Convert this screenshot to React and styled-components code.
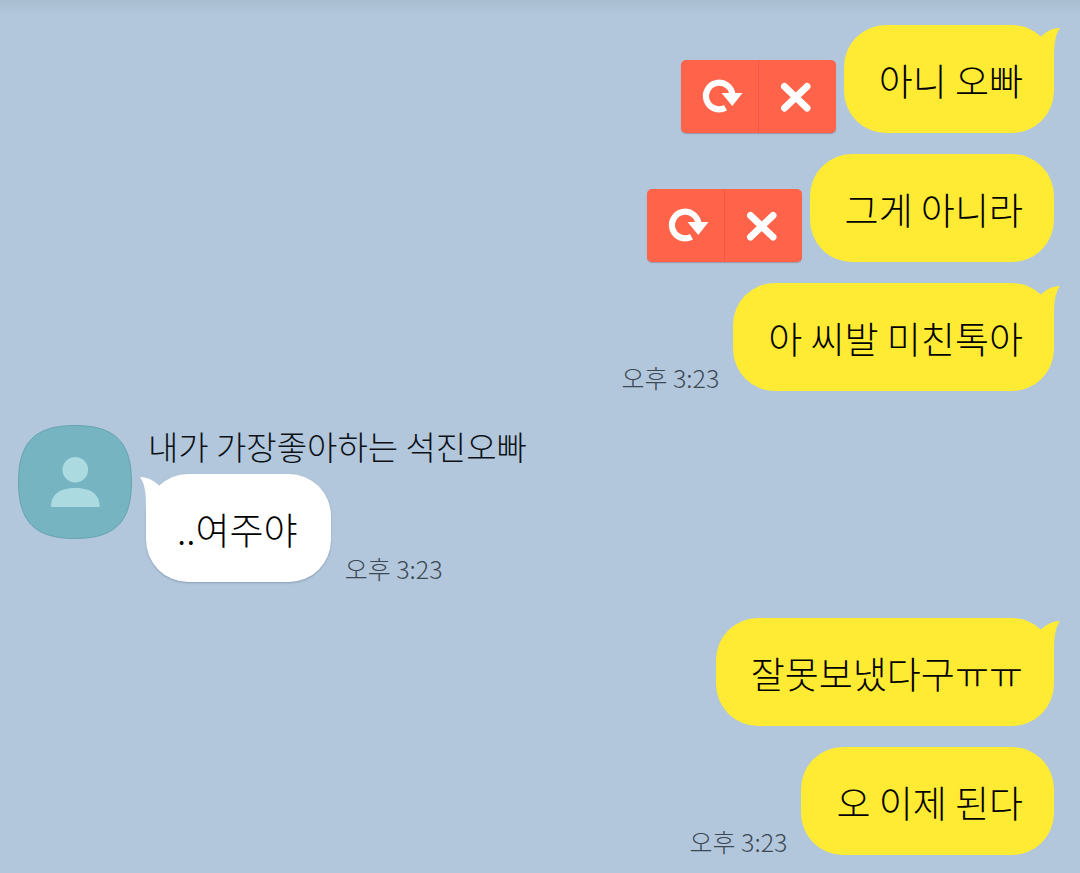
import React from "react";
import styled, { createGlobalStyle, css } from "styled-components";

const messages = [
	{ id: 1, text: "아니 오빠", failed: true, tail: true },
	{ id: 2, text: "그게 아니라", failed: true },
	{ id: 3, text: "아 씨발 미친톡아", time: "오후 3:23", tail: true },
	{ id: 4, text: "..여주야", time: "오후 3:23", sender: "내가 가장좋아하는 석진오빠", tail: true },
	{ id: 5, text: "잘못보냈다구ㅠㅠ", tail: true },
	{ id: 6, text: "오 이제 된다", time: "오후 3:23" },
];

const TailShape = ({ incoming }) => (
	<Tail $incoming={incoming} viewBox="0 0 28 42" aria-hidden="true">
		<path d="M9 11.5C14 7 20 3 28 3C24 9 22 16 22 32V42H9Z" />
	</Tail>
);

const RetryIcon = () => (
	<svg width="77" height="73" viewBox="0 0 77 73" aria-hidden="true">
		<path d="M44.5 47.8A13.3 13.3 0 1 1 51.5 35" fill="none" stroke="#fff" strokeWidth="6.2" />
		<path d="M40.5 33H61.5L51.3 46Z" fill="#fff" />
	</svg>
);

const DeleteIcon = () => (
	<svg width="77" height="73" viewBox="0 0 77 73" aria-hidden="true">
		<path d="M25.5 26.5L48 48M48 26.5L25.5 48" stroke="#fff" strokeWidth="7" strokeLinecap="round" />
	</svg>
);

const FailedActions = () => (
	<ActionGroup>
		<ActionButton type="button" aria-label="다시 보내기">
			<RetryIcon />
		</ActionButton>
		<ActionButton type="button" aria-label="삭제">
			<DeleteIcon />
		</ActionButton>
	</ActionGroup>
);

const Avatar = () => (
	<AvatarIcon viewBox="0 0 114 114" aria-hidden="true">
		<path
			d="M57 .5C97 .5 113.5 17 113.5 57C113.5 97 97 113.5 57 113.5C17 113.5 .5 97 .5 57C.5 17 17 .5 57 .5Z"
			fill="#75b4c0"
			stroke="#68a3b1"
		/>
		<circle cx="57.3" cy="44.7" r="12.8" fill="#acdae1" />
		<path d="M33 82C33 69 42 63 57.3 63C72.5 63 81.7 69 81.7 82Z" fill="#acdae1" />
	</AvatarIcon>
);

const OutgoingMessage = ({ message }) => (
	<OutgoingRow>
		{message.failed && <FailedActions />}
		{message.time && <Time>{message.time}</Time>}
		<Bubble>
			{message.text}
			{message.tail && <TailShape />}
		</Bubble>
	</OutgoingRow>
);

const IncomingMessage = ({ message }) => (
	<IncomingRow>
		<Avatar />
		<IncomingBody>
			<Sender>{message.sender}</Sender>
			<BubbleLine>
				<Bubble $incoming>
					{message.text}
					{message.tail && <TailShape incoming />}
				</Bubble>
				<Time>{message.time}</Time>
			</BubbleLine>
		</IncomingBody>
	</IncomingRow>
);

const App = () => (
	<ChatRoom>
		<GlobalStyle />
		<MessageList>
			{messages.map((message) =>
				message.sender ? (
					<IncomingMessage key={message.id} message={message} />
				) : (
					<OutgoingMessage key={message.id} message={message} />
				)
			)}
		</MessageList>
	</ChatRoom>
);

export default App;

const GlobalStyle = createGlobalStyle`
	* {
		box-sizing: border-box;
	}

	body {
		margin: 0;
		background-color: #b2c7db;
		font-family: "Noto Sans CJK KR", sans-serif;
		font-weight: 300;
	}
`;
const ChatRoom = styled.main`
	background: linear-gradient(#a9bdcf, #b2c7db 14px);
	min-height: 100vh;
	padding: 25px 26px 18px 18px;
`;
const MessageList = styled.ul`
	display: flex;
	flex-direction: column;
	gap: 21px;
	list-style: none;
	margin: 0;
	padding: 0;
`;
const OutgoingRow = styled.li`
	display: flex;
	justify-content: flex-end;
	align-items: flex-end;
`;
const IncomingRow = styled.li`
	display: flex;
	align-items: flex-start;
	gap: 14px;
	margin: 13px 0 15px;
`;
const IncomingBody = styled.div`
	display: flex;
	flex-direction: column;
`;
const BubbleLine = styled.div`
	display: flex;
	align-items: flex-end;
`;
const Sender = styled.span`
	color: #0c1117;
	font-size: 33px;
	line-height: 42px;
	padding: 0 0 7px 2px;
`;
const Bubble = styled.div`
	position: relative;
	background-color: #ffeb33;
	border-radius: 42px;
	color: #000;
	font-size: 37px;
	line-height: 48px;
	padding: 31px 31px 29px 35px;

	${({ $incoming }) =>
		$incoming &&
		css`
			background-color: #fff;
			box-shadow: 0 1px 2px rgba(60, 80, 110, 0.35);
			padding: 31px 33px 29px 31px;
		`}
`;
const Tail = styled.svg`
	position: absolute;
	top: 0;
	right: -6px;
	width: 28px;
	height: 42px;
	fill: #ffeb33;

	${({ $incoming }) =>
		$incoming &&
		css`
			right: auto;
			left: -6px;
			fill: #fff;
			transform: scaleX(-1);
		`}
`;
const Time = styled.time`
	color: #3c4854;
	font-size: 25px;
	line-height: 28px;
	margin: 0 14px;
`;
const ActionGroup = styled.div`
	display: flex;
	background-color: #ff634a;
	border-radius: 5px;
	box-shadow: 0 1px 1px rgba(120, 80, 90, 0.4);
	margin-right: 8px;
	overflow: hidden;
`;
const ActionButton = styled.button`
	display: flex;
	background: none;
	border: none;
	padding: 0;
	cursor: pointer;

	& + & {
		border-left: 1px solid #ee5a45;
	}
`;
const AvatarIcon = styled.svg`
	flex: none;
	width: 114px;
	height: 114px;
`;
